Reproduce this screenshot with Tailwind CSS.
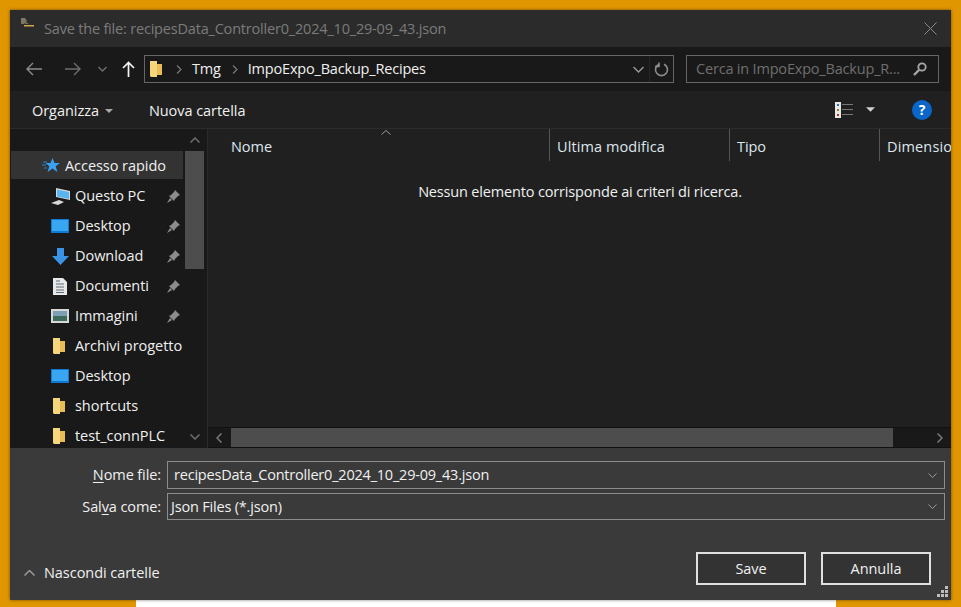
<!DOCTYPE html>
<html lang="it">
<head>
<meta charset="UTF-8" />
<title>Save the file</title>
<script src="https://cdn.jsdelivr.net/npm/@tailwindcss/browser@4"></script>
</head>
<body class="relative w-[961px] h-[607px] overflow-hidden bg-[#e09600] font-['Open_Sans',sans-serif] text-[14.5px] tracking-[-0.05px] text-[#f0f0f0]">
  <!-- page behind the dialog -->
  <div class="absolute left-[136px] top-[600px] w-[700px] h-[7px] bg-white"></div>

  <div class="absolute left-[10px] top-[10px] w-[941px] h-[590px] flex flex-col bg-[#3a3a3a] shadow-[0_0_3px_rgba(0,0,0,0.5)]">
    <!-- title bar -->
    <div class="h-[37px] shrink-0 flex items-center bg-[#2b2b2b] pl-[10px] pr-[14px]">
      <svg class="w-[14px] h-[9px] -mt-[13px]" viewBox="0 0 14 9"><path d="M1 0h4l2 3-3 3H1z" fill="#7d7663"/><path d="M5 3l4 3H5z" fill="#6f6a58"/><path d="M4 7h10v1.500H4z" fill="#d0a648"/></svg>
      <span class="ml-[10px] text-[#7b7b7b] tracking-[-0.19px]">Save the file: recipesData_Controller0_2024_10_29-09_43.json</span>
      <svg class="ml-auto w-[13px] h-[13px]" viewBox="0 0 13 13"><path d="M.5.5l12 12M12.5.5l-12 12" stroke="#8a8a8a" stroke-width="1" fill="none"/></svg>
    </div>

    <!-- navigation bar -->
    <div class="h-[44px] shrink-0 flex items-center bg-[#191919] pr-[12px]">
      <svg class="ml-[16px] w-[16px] h-[14px]" viewBox="0 0 16 14"><path d="M16 7H1M7 1L1 7l6 6" stroke="#8c8c8c" stroke-width="1.400" fill="none"/></svg>
      <svg class="ml-[23px] w-[16px] h-[14px]" viewBox="0 0 16 14"><path d="M0 7h15M9 1l6 6-6 6" stroke="#6e6e6e" stroke-width="1.400" fill="none"/></svg>
      <svg class="ml-[17px] w-[9px] h-[6px]" viewBox="0 0 9 6"><path d="M.5 1l4 4 4-4" stroke="#6e6e6e" stroke-width="1.400" fill="none"/></svg>
      <svg class="ml-[15px] w-[13px] h-[16px]" viewBox="0 0 13 16"><path d="M6.500 16V1.500M1 7l5.500-5.500L12 7" stroke="#f5f5f5" stroke-width="1.700" fill="none"/></svg>
      <div class="ml-[9px] w-[530px] h-[28px] flex items-center border border-[#666] bg-[#191919] tracking-[-0.19px]">
        <svg class="ml-[5px] w-[12px] h-[18px]" viewBox="0 0 12 18"><path d="M0 1h7v16H1l-1-1z" fill="#f6d67c"/><path d="M7 4h5v11H7z" fill="#e8bd58"/></svg>
        <svg class="ml-[14px] w-[6px] h-[9px]" viewBox="0 0 6 9"><path d="M1 .5l4 4-4 4" stroke="#7a7a7a" stroke-width="1.200" fill="none"/></svg>
        <span class="ml-[10px]">Tmg</span>
        <svg class="ml-[11px] w-[6px] h-[9px]" viewBox="0 0 6 9"><path d="M1 .5l4 4-4 4" stroke="#7a7a7a" stroke-width="1.200" fill="none"/></svg>
        <span class="ml-[10px]">ImpoExpo_Backup_Recipes</span>
        <svg class="ml-auto w-[11px] h-[7px]" viewBox="0 0 11 7"><path d="M.5 1l5 5 5-5" stroke="#9a9a9a" stroke-width="1.400" fill="none"/></svg>
        <div class="ml-[5px] h-full w-[1px] bg-[#262626]"></div>
        <svg class="mx-[4px] w-[15px] h-[15px]" viewBox="0 0 15 15"><path d="M5 2.200a6 6 0 1 0 5 0M5 .5v4h-4" stroke="#8c8c8c" stroke-width="1.600" fill="none"/></svg>
      </div>
      <div class="ml-[12px] w-[253px] h-[28px] flex items-center border border-[#666] pl-[9px] pr-[11px] text-[#6f6f6f] tracking-[-0.19px]">
        <span class="whitespace-nowrap">Cerca in ImpoExpo_Backup_R...</span>
        <svg class="ml-auto w-[14px] h-[14px]" viewBox="0 0 14 14"><circle cx="9" cy="5" r="3.700" stroke="#a8a8a8" stroke-width="1.800" fill="none"/><path d="M6 8l-5 5" stroke="#a8a8a8" stroke-width="2.400"/></svg>
      </div>
    </div>

    <!-- toolbar -->
    <div class="h-[38px] shrink-0 flex items-center bg-[#202020] border-b border-[#2c2c2c] pt-[2px] pl-[22px] pr-[19px]">
      <span>Organizza</span>
      <svg class="ml-[6px] w-[8px] h-[4px]" viewBox="0 0 8 4"><path d="M0 0h8L4 4z" fill="#a8a8a8"/></svg>
      <span class="ml-[36px]">Nuova cartella</span>
      <svg class="ml-auto -mt-[2px] w-[18px] h-[16px]" viewBox="0 0 18 16"><path d="M0 0h6v16H0z" fill="#e8e8e8"/><path d="M2 2h2v2H2z" fill="#2f72b5"/><path d="M2 7h2v2H2z" fill="#8a7d2c"/><path d="M2 12h2v2H2z" fill="#b5341f"/><path d="M7 2.500h11M7 7.500h11M7 12.500h11" stroke="#777" fill="none"/></svg>
      <svg class="ml-[13px] -mt-[2px] w-[9px] h-[5px]" viewBox="0 0 8 4"><path d="M0 0h8L4 4z" fill="#d0d0d0"/></svg>
      <div class="ml-[37px] -mt-[2px] w-[20px] h-[20px] rounded-full bg-[#0a66c8] flex items-center justify-center text-white text-[14px] font-bold leading-none">?</div>
    </div>

    <!-- body -->
    <div class="h-[319px] shrink-0 flex bg-[#191919]">
      <!-- sidebar -->
      <div class="w-[175px] shrink-0 pt-[22px] pl-[1px] overflow-hidden">
        <div class="h-[28px] mr-[2px] mb-[1px] flex items-center bg-[#333333] pl-[31px] pt-[2px]">
          <svg class="w-[18px] h-[15px] -mt-[2px]" viewBox="0 0 18 15"><path d="M10.500 0l2 5H18l-4.300 3.300 1.700 5.700-4.900-3.400-4.900 3.400 1.700-5.700L3.500 5h5z" fill="#3aa0f0"/><path d="M1 4h4M0 7h4M2 10h3" stroke="#2a86d8"/></svg>
          <span class="ml-[5px]">Accesso rapido</span>
        </div>
        <div class="h-[30px] flex items-center pl-[40px] pt-[2px]">
          <svg class="w-[19px] h-[17px]" viewBox="0 0 19 17"><path d="M5 0l14 3v9L5 9z" fill="#d8d8d8"/><path d="M6 1.500l12 2.500v7L6 8.500z" fill="#5ab4ee"/><path d="M0 15l8-3 5 2-6 3z" fill="#d8d8d8"/></svg>
          <span class="ml-[5px]">Questo PC</span>
          <svg class="ml-auto mr-[5px] w-[13px] h-[13px]" viewBox="0 0 13 13"><path d="M8 0l5 5-2 1-3 3-1 2-5-5 2-1 3-3zM3 8l-3 5 5-3z" fill="#8c8c8c"/></svg>
        </div>
        <div class="h-[30px] flex items-center pl-[40px] pt-[2px]">
          <svg class="w-[18px] h-[14px]" viewBox="0 0 18 14"><path d="M0 0h18v14H0z" fill="#0f7ad6"/><path d="M1 1h16v11H1z" fill="#39a6f2"/></svg>
          <span class="ml-[6px]">Desktop</span>
          <svg class="ml-auto mr-[5px] w-[13px] h-[13px]" viewBox="0 0 13 13"><path d="M8 0l5 5-2 1-3 3-1 2-5-5 2-1 3-3zM3 8l-3 5 5-3z" fill="#8c8c8c"/></svg>
        </div>
        <div class="h-[30px] flex items-center pl-[41px] pt-[2px]">
          <svg class="w-[17px] h-[17px]" viewBox="0 0 17 17"><path d="M5 0h7v8h5l-8.500 9L0 8h5z" fill="#3b93e6"/></svg>
          <span class="ml-[6px]">Download</span>
          <svg class="ml-auto mr-[5px] w-[13px] h-[13px]" viewBox="0 0 13 13"><path d="M8 0l5 5-2 1-3 3-1 2-5-5 2-1 3-3zM3 8l-3 5 5-3z" fill="#8c8c8c"/></svg>
        </div>
        <div class="h-[30px] flex items-center pl-[42px] pt-[2px]">
          <svg class="w-[14px] h-[17px]" viewBox="0 0 14 17"><path d="M0 0h10l4 4v13H0z" fill="#e8e8e8"/><path d="M3 3h4M3 6h8M3 9h8M3 12h8M3 14.500h8" stroke="#5a6b7a" fill="none"/></svg>
          <span class="ml-[8px]">Documenti</span>
          <svg class="ml-auto mr-[5px] w-[13px] h-[13px]" viewBox="0 0 13 13"><path d="M8 0l5 5-2 1-3 3-1 2-5-5 2-1 3-3zM3 8l-3 5 5-3z" fill="#8c8c8c"/></svg>
        </div>
        <div class="h-[30px] flex items-center pl-[40px] pt-[2px]">
          <svg class="w-[18px] h-[14px]" viewBox="0 0 18 14"><path d="M0 0h18v14H0z" fill="#d8d8d8"/><path d="M2 2h14v5H2z" fill="#7da0b5"/><path d="M2 7h14v5H2z" fill="#3f6b5c"/></svg>
          <span class="ml-[6px]">Immagini</span>
          <svg class="ml-auto mr-[5px] w-[13px] h-[13px]" viewBox="0 0 13 13"><path d="M8 0l5 5-2 1-3 3-1 2-5-5 2-1 3-3zM3 8l-3 5 5-3z" fill="#8c8c8c"/></svg>
        </div>
        <div class="h-[30px] flex items-center pl-[42px] pt-[2px]">
          <svg class="w-[12px] h-[18px]" viewBox="0 0 12 18"><path d="M0 1h7v16H1l-1-1z" fill="#f6d67c"/><path d="M7 4h5v11H7z" fill="#e8bd58"/></svg>
          <span class="ml-[10px] whitespace-nowrap">Archivi progetto</span>
        </div>
        <div class="h-[30px] flex items-center pl-[40px] pt-[2px]">
          <svg class="w-[18px] h-[14px]" viewBox="0 0 18 14"><path d="M0 0h18v14H0z" fill="#0f7ad6"/><path d="M1 1h16v11H1z" fill="#39a6f2"/></svg>
          <span class="ml-[6px]">Desktop</span>
        </div>
        <div class="h-[30px] flex items-center pl-[42px] pt-[2px]">
          <svg class="w-[12px] h-[18px]" viewBox="0 0 12 18"><path d="M0 1h7v16H1l-1-1z" fill="#f6d67c"/><path d="M7 4h5v11H7z" fill="#e8bd58"/></svg>
          <span class="ml-[10px]">shortcuts</span>
        </div>
        <div class="h-[30px] flex items-center pl-[42px] pt-[2px]">
          <svg class="w-[12px] h-[18px]" viewBox="0 0 12 18"><path d="M0 1h7v16H1l-1-1z" fill="#f6d67c"/><path d="M7 4h5v11H7z" fill="#e8bd58"/></svg>
          <span class="ml-[10px] whitespace-nowrap">test_connPLC</span>
        </div>
      </div>
      <!-- sidebar scrollbar -->
      <div class="w-[19px] mr-[3px] shrink-0 flex flex-col items-center">
        <svg class="mt-[8px] w-[10px] h-[6px]" viewBox="0 0 10 6"><path d="M.5 5.500L5 1l4.500 4.500" stroke="#6e6e6e" stroke-width="1.500" fill="none"/></svg>
        <div class="mt-[8px] w-[19px] h-[118px] bg-[#4d4d4d]"></div>
        <svg class="mt-auto mb-[8px] w-[10px] h-[6px]" viewBox="0 0 10 6"><path d="M.5.5L5 5 9.500.5" stroke="#6e6e6e" stroke-width="1.500" fill="none"/></svg>
      </div>
      <!-- file list -->
      <div class="relative flex-1 min-w-0 flex flex-col bg-[#202020] border-l border-[#2a2a2a] overflow-hidden">
        <svg class="absolute left-[173px] top-[1px] w-[10px] h-[5px]" viewBox="0 0 10 5"><path d="M.5 4.500L5 .5l4.500 4" stroke="#9a9a9a" fill="none"/></svg>
        <div class="h-[32px] shrink-0 flex items-center text-[#dfe6ee] whitespace-nowrap">
          <div class="w-[341px] shrink-0 pl-[23px] pt-[3px]">Nome</div>
          <div class="w-[180px] shrink-0 h-full flex items-center border-l border-[#555] pl-[7px] pt-[3px] tracking-[0.1px]">Ultima modifica</div>
          <div class="w-[150px] shrink-0 h-full flex items-center border-l border-[#555] pl-[7px] pt-[3px]">Tipo</div>
          <div class="shrink-0 h-full flex items-center border-l border-[#555] pl-[7px] pt-[3px] tracking-[0.15px]">Dimensione</div>
        </div>
        <div class="flex-1 pt-[20px] pl-[1px] text-center tracking-[-0.17px]">Nessun elemento corrisponde ai criteri di ricerca.</div>
        <!-- horizontal scrollbar -->
        <div class="h-[21px] shrink-0 flex items-center bg-[#191919] border-y border-[#111]">
          <svg class="ml-[8px] w-[6px] h-[10px]" viewBox="0 0 6 10"><path d="M5.500.5L1 5l4.500 4.500" stroke="#7a7a7a" stroke-width="1.500" fill="none"/></svg>
          <div class="ml-[9px] w-[662px] h-full bg-[#4d4d4d]"></div>
          <svg class="ml-auto mr-[8px] w-[6px] h-[10px]" viewBox="0 0 6 10"><path d="M.5.5L5 5 .5 9.500" stroke="#7a7a7a" stroke-width="1.500" fill="none"/></svg>
        </div>
      </div>
    </div>

    <!-- footer -->
    <div class="relative flex-1 min-h-0 bg-[#3a3a3a] pt-[13px] pr-[6px]">
      <div class="flex items-center h-[28px]">
        <div class="w-[151px] text-right tracking-[-0.1px]"><span class="underline underline-offset-2">N</span>ome file:</div>
        <div class="ml-[6px] flex-1 h-full flex items-center border border-[#8c8c8c] pl-[6px] pr-[7px]">
          <span class="tracking-[-0.21px]">recipesData_Controller0_2024_10_29-09_43.json</span>
          <svg class="ml-auto w-[9px] h-[5px]" viewBox="0 0 9 5"><path d="M.5.500L4.500 4.500 8.500.5" stroke="#9a9a9a" fill="none"/></svg>
        </div>
      </div>
      <div class="flex items-center h-[28px] mt-[3px] pt-[1px]">
        <div class="w-[151px] text-right tracking-[-0.1px]">Sal<span class="underline underline-offset-2">v</span>a come:</div>
        <div class="ml-[6px] flex-1 h-full flex items-center border border-[#8c8c8c] pl-[3px] pr-[7px]">
          <span class="tracking-[-0.19px]">Json Files (*.json)</span>
          <svg class="ml-auto w-[9px] h-[5px]" viewBox="0 0 9 5"><path d="M.5.500L4.500 4.500 8.500.5" stroke="#9a9a9a" fill="none"/></svg>
        </div>
      </div>
      <div class="flex items-center mt-[32px] pr-[14px]">
        <div class="flex items-center mt-[9px] pl-[14px]">
          <svg class="w-[11px] h-[6px]" viewBox="0 0 11 6"><path d="M.5 5.500l5-5 5 5" stroke="#9a9a9a" stroke-width="1.500" fill="none"/></svg>
          <span class="ml-[9px]">Nascondi cartelle</span>
        </div>
        <button class="ml-auto w-[110px] h-[33px] border-2 border-[#e0e0e0] bg-[#333333]">Save</button>
        <button class="ml-[15px] w-[110px] h-[33px] border-2 border-[#e0e0e0] bg-[#333333]">Annulla</button>
      </div>
      <!-- resize grip -->
      <svg class="absolute right-[3px] bottom-[3px] w-[11px] h-[11px]" viewBox="0 0 11 11"><path d="M8 0h3v3H8zM4 4h3v3H4zM8 4h3v3H8zM0 8h3v3H0zM4 8h3v3H4zM8 8h3v3H8z" fill="#bdbdbd"/></svg>
    </div>
  </div>
</body>
</html>
